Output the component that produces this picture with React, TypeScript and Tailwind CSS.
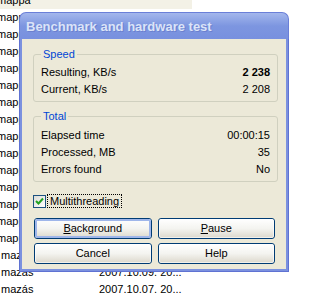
import React from 'react';

const rows = [
  ...Array.from({ length: 15 }, () => ({ name: 'mappa', date: '' })),
  { name: 'mazás', date: '' },
  { name: 'mazás', date: '2007.10.09. 20...' },
  { name: 'mazás', date: '2007.10.07. 20...' },
];

const GroupBox: React.FC<{ title: string; items: { label: string; value: string; bold?: boolean }[]; className?: string }> = ({ title, items, className }) => (
  <fieldset className={`border border-[#d0d0bf] rounded-[3px] pl-[7px] pr-[7px] ${className ?? ''}`}>
    <legend className="px-[2px] text-[#0046d5] leading-[13px]">{title}</legend>
    <div className="flex flex-col">
      {items.map((it) => (
        <div key={it.label} className="flex justify-between h-[17px] leading-[17px]">
          <span>{it.label}</span>
          <span className={it.bold ? 'font-bold' : ''}>{it.value}</span>
        </div>
      ))}
    </div>
  </fieldset>
);

const XpButton: React.FC<{ children: React.ReactNode; isDefault?: boolean }> = ({ children, isDefault }) => (
  <button className="h-[21px] rounded-[3px] border border-[#003c74] bg-gradient-to-b from-white via-[#f4f4f0] to-[#dcd8cc] p-0 text-black">
    <div
      className={`h-full w-full rounded-[2px] flex items-center justify-center ${
        isDefault ? 'border-2 border-[#9fb6ea]' : 'border border-white/60'
      }`}
    >
      {children}
    </div>
  </button>
);

export default function App() {
  return (
    <div className="relative w-[310px] h-[294px] overflow-hidden bg-white text-[11px] text-black" style={{ fontFamily: '"Liberation Sans", Arial, sans-serif' }}>
      {/* explorer list behind */}
      <div className="flex flex-col -mt-[8px]">
        {rows.map((r, i) => (
          <div key={i} className={`flex h-[17px] leading-[17px] ${i === 0 ? 'bg-[#f3f1e6] w-[192px]' : ''}`}>
            <span className={`w-[100px] ${r.name === 'mappa' ? '-ml-[3px]' : 'ml-[1px]'}`}>{r.name}</span>
            <span className="-ml-[2px]">{r.date}</span>
          </div>
        ))}
      </div>

      {/* dialog window */}
      <div className="absolute left-[19px] top-[12px] w-[270px] h-[260px] flex flex-col">
        <div className="h-[27px] rounded-t-[7px] bg-gradient-to-b from-[#a3b6ec] via-[#7d96e0] to-[#7890df] border border-b-0 border-[#6a7fd8] flex items-center pl-[6px] pt-[1px]">
          <span className="font-bold text-[13px] text-[#dbe4f8] [text-shadow:1px_1px_0_#6b80cf]">Benchmark and hardware test</span>
        </div>
        <div className="flex-1 bg-[#7b91df] border-x border-b border-[#5f72d2] px-[2px] pb-[2px]">
          <div className="h-full bg-[#ece9d8] pl-[11px] pr-[8px] pt-[9px] flex flex-col">
            <GroupBox
              title="Speed"
              className="pt-[3px] pb-[3px]"
              items={[
                { label: 'Resulting, KB/s', value: '2 238', bold: true },
                { label: 'Current, KB/s', value: '2 208' },
              ]}
            />
            <GroupBox
              title="Total"
              className="mt-[8px] pt-[4px] pb-[3px]"
              items={[
                { label: 'Elapsed time', value: '00:00:15' },
                { label: 'Processed, MB', value: '35' },
                { label: 'Errors found', value: 'No' },
              ]}
            />
            <div className="mt-[12px] flex items-center h-[14px]">
              <div className="w-[13px] h-[13px] border border-[#1c5180] bg-gradient-to-br from-[#dcdcd7] to-white flex items-center justify-center">
                <svg width="9" height="9" viewBox="0 0 9 9">
                  <path d="M1 4 L3.5 6.5 L8 1.5" stroke="#21a121" strokeWidth="2" fill="none" />
                </svg>
              </div>
              <span className="ml-[1px] px-[2px] border border-dotted border-black leading-[12px]">Multithreading</span>
            </div>
            <div className="mt-[10px] ml-[1px] mr-[3px] grid grid-cols-2 gap-x-[6px] gap-y-[4px]">
              <XpButton isDefault>
                <span><span className="underline">B</span>ackground</span>
              </XpButton>
              <XpButton>
                <span><span className="underline">P</span>ause</span>
              </XpButton>
              <XpButton>Cancel</XpButton>
              <XpButton>Help</XpButton>
            </div>
          </div>
        </div>
      </div>
    </div>
  );
}
